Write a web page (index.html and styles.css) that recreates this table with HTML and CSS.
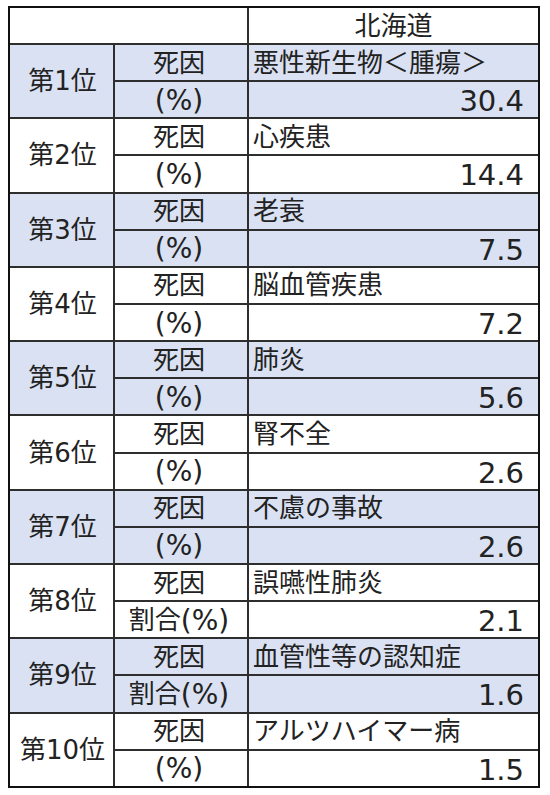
FILE: index.html
```html
<!DOCTYPE html>
<html lang="ja">
<head>
<meta charset="utf-8">
<title>死因順位</title>
<link rel="stylesheet" href="styles.css">
</head>
<body>
<div class="sheet">
  <div class="cell head-blank"></div>
  <div class="cell head">北海道</div>

  <div class="cell rank blue">第1位</div>
  <div class="cell label blue">死因</div>
  <div class="cell cause blue">悪性新生物＜腫瘍＞</div>
  <div class="cell label blue"><span class="pct">(%)</span></div>
  <div class="cell num blue">30.4</div>

  <div class="cell rank">第2位</div>
  <div class="cell label">死因</div>
  <div class="cell cause">心疾患</div>
  <div class="cell label"><span class="pct">(%)</span></div>
  <div class="cell num">14.4</div>

  <div class="cell rank blue">第3位</div>
  <div class="cell label blue">死因</div>
  <div class="cell cause blue">老衰</div>
  <div class="cell label blue"><span class="pct">(%)</span></div>
  <div class="cell num blue">7.5</div>

  <div class="cell rank">第4位</div>
  <div class="cell label">死因</div>
  <div class="cell cause">脳血管疾患</div>
  <div class="cell label"><span class="pct">(%)</span></div>
  <div class="cell num">7.2</div>

  <div class="cell rank blue">第5位</div>
  <div class="cell label blue">死因</div>
  <div class="cell cause blue">肺炎</div>
  <div class="cell label blue"><span class="pct">(%)</span></div>
  <div class="cell num blue">5.6</div>

  <div class="cell rank">第6位</div>
  <div class="cell label">死因</div>
  <div class="cell cause">腎不全</div>
  <div class="cell label"><span class="pct">(%)</span></div>
  <div class="cell num">2.6</div>

  <div class="cell rank blue">第7位</div>
  <div class="cell label blue">死因</div>
  <div class="cell cause blue">不慮の事故</div>
  <div class="cell label blue"><span class="pct">(%)</span></div>
  <div class="cell num blue">2.6</div>

  <div class="cell rank">第8位</div>
  <div class="cell label">死因</div>
  <div class="cell cause">誤嚥性肺炎</div>
  <div class="cell label">割合<span class="pct">(%)</span></div>
  <div class="cell num">2.1</div>

  <div class="cell rank blue">第9位</div>
  <div class="cell label blue">死因</div>
  <div class="cell cause blue">血管性等の認知症</div>
  <div class="cell label blue">割合<span class="pct">(%)</span></div>
  <div class="cell num blue">1.6</div>

  <div class="cell rank">第10位</div>
  <div class="cell label">死因</div>
  <div class="cell cause">アルツハイマー病</div>
  <div class="cell label"><span class="pct">(%)</span></div>
  <div class="cell num">1.5</div>
</div>
</body>
</html>
```
FILE: styles.css
```css
html, body {
  margin: 0;
  padding: 0;
  background: #ffffff;
}

body {
  padding: 6px 0 0 8px;
  font-family: "DejaVu Sans", "Noto Sans CJK JP", sans-serif;
  color: #222222;
}

.sheet {
  display: grid;
  grid-template-columns: 103px 132px 289px;
  grid-template-rows: 35px repeat(20, 35.15px);
  gap: 2px;
  width: max-content;
  background: #2e2e2e;
  border: 2px solid #111111;
}

.cell {
  display: flex;
  align-items: center;
  background: #ffffff;
  font-size: 26px;
  line-height: 1;
  white-space: nowrap;
  overflow: hidden;
}

.blue {
  background: #d9e1f2;
}

.head-blank {
  grid-column: span 2;
}

.head {
  justify-content: center;
}

.rank {
  grid-row: span 2;
  justify-content: center;
  padding-left: 2px;
}

.label {
  justify-content: center;
  padding-right: 4px;
}

.pct {
  font-size: 28px;
  padding-top: 2px;
}

.cause {
  padding-left: 4px;
}

.num {
  justify-content: flex-end;
  padding-right: 14px;
  font-size: 29px;
  padding-top: 4px;
}
```
